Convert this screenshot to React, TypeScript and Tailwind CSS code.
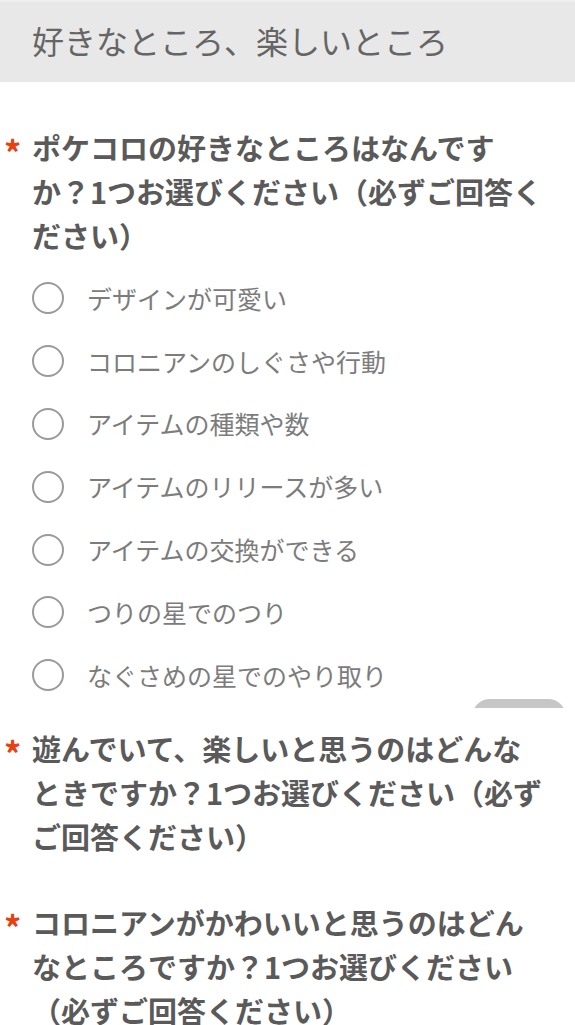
import React from "react";

const FONT = "font-['Noto_Sans_CJK_JP','Noto_Sans',sans-serif]";

const OPTIONS = [
  "デザインが可愛い",
  "コロニアンのしぐさや行動",
  "アイテムの種類や数",
  "アイテムのリリースが多い",
  "アイテムの交換ができる",
  "つりの星でのつり",
  "なぐさめの星でのやり取り",
] as const;

function Question({ children }: { children: React.ReactNode }) {
  return (
    <div className="flex text-[29px] leading-[44px] font-bold">
      <span className="w-8 shrink-0 translate-y-[5px] pl-[4px] text-[34px] text-[#e8400f]">*</span>
      <p className="flex-1 pr-[29px] text-[#5a5a5a]">{children}</p>
    </div>
  );
}

function Radio({ label }: { label: string }) {
  return (
    <label className="flex h-[62.8px] items-center pl-8">
      <span className="h-8 w-8 shrink-0 rounded-full border-2 border-[#9a9a9a] bg-white" />
      <span className="ml-[23px] text-[25px] leading-none text-[#7c7c7c]">{label}</span>
    </label>
  );
}

export default function App() {
  return (
    <div className={`${FONT} min-h-[1025px] w-full bg-white`}>
      {/* section title */}
      <div className="flex h-[82px] items-center border-t-2 border-[#efefef] bg-[#e8e8e8] pl-8">
        <h2 className="-mt-1 text-[32px] leading-none text-[#656565]">
          好きなところ、楽しいところ
        </h2>
      </div>

      <div className="pt-[43px]">
        <Question>ポケコロの好きなところはなんですか？1つお選びください（必ずご回答ください）</Question>
        <div className="relative mt-[10px]">
          {OPTIONS.map((o) => (
            <Radio key={o} label={o} />
          ))}
          {/* top of floating button, cut off */}
          <div className="absolute bottom-[-1px] right-[9px] h-[9px] w-[94px] overflow-hidden">
            <div className="h-[40px] w-full rounded-[18px] bg-[#c6c6c6]" />
          </div>
        </div>
      </div>

      <div className="pt-[19px]">
        <Question>遊んでいて、楽しいと思うのはどんなときですか？1つお選びください（必ずご回答ください）</Question>
      </div>

      <div className="pt-[42px]">
        <Question>コロニアンがかわいいと思うのはどんなところですか？1つお選びください（必ずご回答ください）</Question>
      </div>
    </div>
  );
}
